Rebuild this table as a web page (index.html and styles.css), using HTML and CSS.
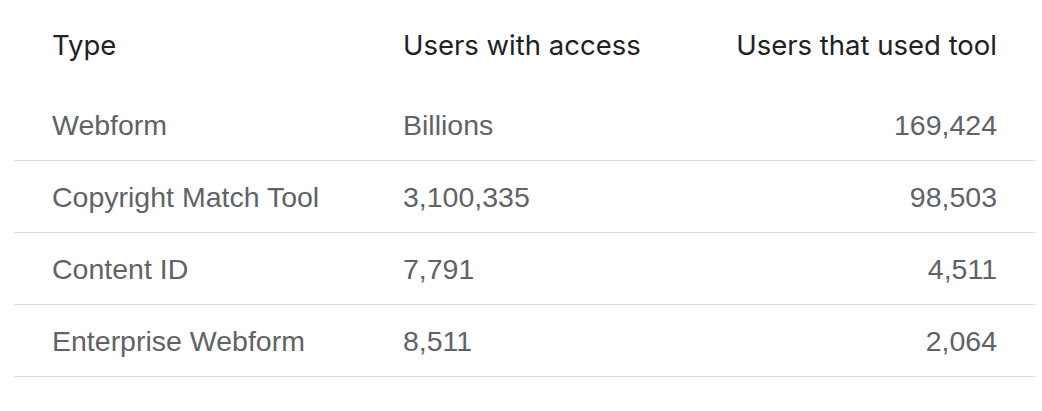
FILE: index.html
```html
<!DOCTYPE html>
<html lang="en">
<head>
<meta charset="utf-8">
<title>Tools</title>
<link rel="stylesheet" href="styles.css">
</head>
<body>
<div class="wrap">
<table class="data">
  <colgroup>
    <col class="c1"><col class="c2"><col class="c3">
  </colgroup>
  <thead>
    <tr><th>Type</th><th>Users with access</th><th class="num">Users that used tool</th></tr>
  </thead>
  <tbody>
    <tr><td>Webform</td><td>Billions</td><td class="num">169,424</td></tr>
    <tr><td>Copyright Match Tool</td><td>3,100,335</td><td class="num">98,503</td></tr>
    <tr><td>Content ID</td><td>7,791</td><td class="num">4,511</td></tr>
    <tr><td>Enterprise Webform</td><td>8,511</td><td class="num">2,064</td></tr>
  </tbody>
</table>
</div>
</body>
</html>
```
FILE: styles.css
```css
html, body {
  margin: 0;
  background: #ffffff;
}
.wrap {
  padding: 0 7px 0 14px;
}
.data {
  width: 1021px;
  border-collapse: collapse;
  table-layout: fixed;
}
.c1 { width: 389px; }
.c2 { width: 260px; }
.data th {
  font-family: "Inter", "Open Sans", sans-serif;
  font-weight: 400;
  font-size: 27.5px;
  line-height: 32px;
  color: #202124;
  text-align: left;
  padding: 29px 38px 28px;
  white-space: nowrap;
}
.data td {
  font-family: "Liberation Sans", Arial, sans-serif;
  font-size: 28.5px;
  line-height: 32px;
  color: #5f6368;
  padding: 20px 38px 19px;
  border-bottom: 1px solid #dadce0;
  white-space: nowrap;
}
.data th:nth-child(2), .data td:nth-child(2) { padding-left: 0; padding-right: 0; }
.data .num { text-align: right; padding-right: 38px; }
```
